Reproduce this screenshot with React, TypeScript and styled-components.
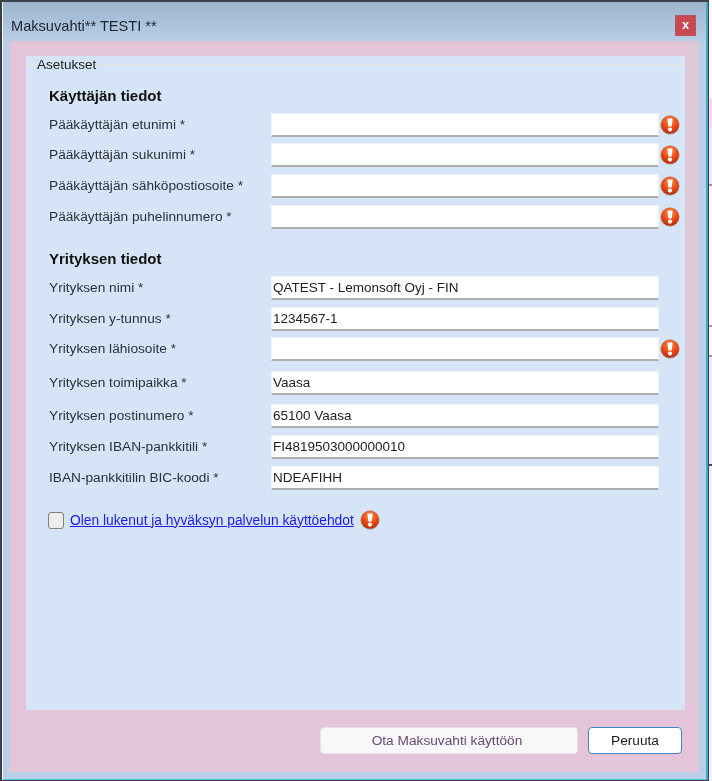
import React from 'react';
import styled, {createGlobalStyle} from 'styled-components';

const userFields = [
    {label: 'Pääkäyttäjän etunimi *', value: '', error: true, pitch: 30},
    {label: 'Pääkäyttäjän sukunimi *', value: '', error: true, pitch: 31},
    {label: 'Pääkäyttäjän sähköpostiosoite *', value: '', error: true, pitch: 31},
    {label: 'Pääkäyttäjän puhelinnumero *', value: '', error: true, pitch: 31},
];

const companyFields = [
    {label: 'Yrityksen nimi *', value: 'QATEST - Lemonsoft Oyj - FIN', pitch: 31},
    {label: 'Yrityksen y-tunnus *', value: '1234567-1', pitch: 30},
    {label: 'Yrityksen lähiosoite *', value: '', error: true, pitch: 34},
    {label: 'Yrityksen toimipaikka *', value: 'Vaasa', pitch: 33},
    {label: 'Yrityksen postinumero *', value: '65100 Vaasa', pitch: 31},
    {label: 'Yrityksen IBAN-pankkitili *', value: 'FI4819503000000010', pitch: 31},
    {label: 'IBAN-pankkitilin BIC-koodi *', value: 'NDEAFIHH', pitch: 31},
];

function ErrorIcon() {
    return (
        <svg width="20" height="20" viewBox="0 0 20 20">
            <defs>
                <radialGradient id="errorBall" cx="50%" cy="30%" r="75%">
                    <stop offset="0%" stopColor="#ff9560"/>
                    <stop offset="50%" stopColor="#f04c14"/>
                    <stop offset="100%" stopColor="#a82a0c"/>
                </radialGradient>
            </defs>
            <circle cx="10" cy="10" r="9.7" fill="#b9a79f"/>
            <circle cx="10" cy="9.8" r="9" fill="url(#errorBall)"/>
            <path d="M7.4 3.6 h5.2 l-1 8 h-3.2 z" fill="#fff"/>
            <circle cx="10" cy="14.6" r="2.1" fill="#fff"/>
        </svg>
    );
}

export default function App() {

    return (
        <>
            <GlobalStyle/>
            <Screen>
                <Window>
                    <TitleBar>
                        <Title>Maksuvahti** TESTI **</Title>
                        <CloseButton>x</CloseButton>
                    </TitleBar>
                    <Panel>
                        <Content>
                            <Legend>Asetukset</Legend>
                            <Heading>Käyttäjän tiedot</Heading>
                            {userFields.map((f) => (
                                <Row key={f.label} $pitch={f.pitch}>
                                    <Label>{f.label}</Label>
                                    <Field readOnly value={f.value}/>
                                    {f.error && <ErrorIcon/>}
                                </Row>
                            ))}
                            <Heading $second>Yrityksen tiedot</Heading>
                            {companyFields.map((f) => (
                                <Row key={f.label} $pitch={f.pitch}>
                                    <Label>{f.label}</Label>
                                    <Field readOnly value={f.value}/>
                                    {f.error && <ErrorIcon/>}
                                </Row>
                            ))}
                            <TermsRow>
                                <Checkbox/>
                                <TermsLink href="#">Olen lukenut ja hyväksyn palvelun käyttöehdot</TermsLink>
                                <ErrorIcon/>
                            </TermsRow>
                        </Content>
                        <Footer>
                            <PrimaryButton>Ota Maksuvahti käyttöön</PrimaryButton>
                            <CancelButton>Peruuta</CancelButton>
                        </Footer>
                    </Panel>
                </Window>
                <Backdrop/>
            </Screen>
        </>
    );

}

const GlobalStyle = createGlobalStyle`
  html, body {
    margin: 0;
    padding: 0;
    background: #fff;
  }

  * {
    box-sizing: border-box;
  }
`;

const Screen = styled.div`
  display: flex;
  width: 712px;
  height: 781px;
  overflow: hidden;
  font-family: "Liberation Sans", Arial, sans-serif;
  font-size: 13.7px;
  color: #222;
  filter: blur(0.45px);
`;

const Window = styled.div`
  display: flex;
  flex-direction: column;
  width: 709px;
  height: 781px;
  flex-shrink: 0;
  padding: 0 9px 8px 8px;
  background: linear-gradient(180deg, #9cb4ce 0, #b9d0e8 42px, #b9d0e8 100%);
  border: 1px solid #3a4148;
  border-left-width: 2px;
  border-top-width: 2px;
  box-shadow: inset 1px 0 0 #f4f6f8, inset -2px 0 0 #3fa9c4, inset 0 -1px 0 #45c4e4;
`;

const Backdrop = styled.div`
  flex: 1;
  background: linear-gradient(
    180deg,
    #fff 0, #fff 98px,
    #f2dcea 98px, #f2dcea 127px,
    #e8effa 127px, #e8effa 184px,
    #999 184px, #999 186px,
    #fff 186px, #fff 325px,
    #999 325px, #999 327px,
    #fff 327px, #fff 355px,
    #999 355px, #999 357px,
    #e8effa 357px, #e8effa 464px,
    #444 464px, #444 466px,
    #eef0fb 466px, #eef0fb 100%
  );
`;

const TitleBar = styled.div`
  display: flex;
  align-items: center;
  justify-content: space-between;
  height: 39px;
  flex-shrink: 0;
  padding: 8px 3px 0 1px;
`;

const Title = styled.span`
  font-size: 14.6px;
  color: #1d2530;
`;

const CloseButton = styled.div`
  display: flex;
  align-items: center;
  justify-content: center;
  width: 21px;
  height: 21px;
  margin-top: -1px;
  padding-bottom: 2px;
  background: #c8494f;
  border: 1px solid #b8555d;
  color: #fff;
  font-weight: 700;
  font-size: 13px;
  line-height: 1;
`;

const Panel = styled.div`
  flex: 1;
  display: flex;
  flex-direction: column;
  padding: 15px 14px 0 16px;
  background:
    linear-gradient(#dcc8d6, #dcc8d6) right top / 14px 662px no-repeat,
    #e3c4d8;
`;

const Content = styled.div`
  position: relative;
  height: 654px;
  padding: 9px 0 0 23px;
  background: #d6e4f7;

  &::before {
    content: '';
    position: absolute;
    left: 0;
    right: 0;
    top: 8px;
    height: 2px;
    background: #e2e4e6;
  }
`;

const Legend = styled.span`
  position: absolute;
  left: 8px;
  top: 1px;
  padding: 0 3px;
  background: #d6e4f7;
  font-size: 13.5px;
  line-height: 16px;
  color: #222;
`;

const Heading = styled.div<{ $second?: boolean }>`
  margin-top: ${(p) => (p.$second ? '13px' : '21px')};
  margin-bottom: 7px;
  height: 20px;
  line-height: 20px;
  font-size: 15px;
  font-weight: 700;
  color: #111;
`;

const Row = styled.div<{ $pitch: number }>`
  display: flex;
  align-items: center;
  height: ${(p) => p.$pitch}px;
  padding-bottom: ${(p) => p.$pitch - 24}px;
`;

const Label = styled.label`
  width: 222px;
  flex-shrink: 0;
  padding-bottom: 1px;
  color: #2b3138;
  font-size: 13.7px;
`;

const Field = styled.input`
  width: 388px;
  height: 24px;
  flex-shrink: 0;
  padding: 0 1px;
  margin-right: 1px;
  background: #fff;
  border: 1px solid #f3f3f5;
  border-bottom: 2px solid #adadad;
  border-radius: 1px;
  outline: none;
  font-family: inherit;
  font-size: 13.5px;
  color: #222;
`;

const TermsRow = styled.div`
  display: flex;
  align-items: center;
  margin-top: 13px;
`;

const Checkbox = styled.span`
  width: 16px;
  height: 17px;
  margin-left: -1px;
  margin-right: 6px;
  background: #eeeeef;
  border: 1.5px solid #808080;
  border-radius: 3px;
`;

const TermsLink = styled.a`
  margin-right: 6px;
  color: #1a1aee;
  font-size: 13.8px;
  text-decoration: underline;
`;

const Footer = styled.div`
  display: flex;
  justify-content: flex-end;
  gap: 10px;
  margin-top: 17px;
  padding-right: 3px;
`;

const PrimaryButton = styled.div`
  display: flex;
  align-items: center;
  justify-content: center;
  width: 258px;
  height: 27px;
  padding-right: 4px;
  background: #f8f7f9;
  border: 1px solid #eadfe6;
  border-radius: 4px;
  color: #6a4a78;
  font-size: 13.7px;
`;

const CancelButton = styled.div`
  display: flex;
  align-items: center;
  justify-content: center;
  width: 94px;
  height: 27px;
  background: #fff;
  border: 1.5px solid #3f86c8;
  border-radius: 4px;
  color: #1a1a1a;
  font-size: 13.7px;
`;
